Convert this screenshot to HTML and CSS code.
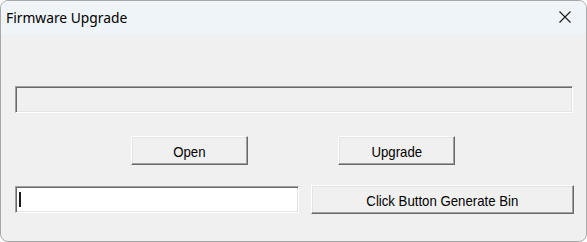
FILE: index.html
```html
<!DOCTYPE html>
<html>
<head>
<meta charset="utf-8">
<link rel="stylesheet" href="styles.css">
</head>
<body>
<div class="window">
  <div class="titlebar">
    <span class="title">Firmware Upgrade</span>
    <svg class="close" width="12" height="12" viewBox="0 0 12 12"><path d="M0.5 0.5 L11.5 11.5 M11.5 0.5 L0.5 11.5" stroke="#1a1a1a" stroke-width="1.1" fill="none"/></svg>
  </div>
  <div class="client">
    <div class="progress"></div>
    <div class="row-buttons">
      <div class="btn btn-open"><span class="label">Open</span></div>
      <div class="btn btn-upgrade"><span class="label">Upgrade</span></div>
    </div>
    <div class="row-bottom">
      <div class="input"><span class="caret"></span></div>
      <div class="btn btn-gen"><span class="label">Click Button Generate Bin</span></div>
    </div>
  </div>
</div>
</body>
</html>
```
FILE: styles.css
```css
html, body {
  margin: 0;
  padding: 0;
  background: #ffffff;
}
.window {
  width: 587px;
  height: 242px;
  box-sizing: border-box;
  border: 1px solid #a8a8a8;
  border-radius: 8px;
  overflow: hidden;
  background: #f0f0f0;
  display: flex;
  flex-direction: column;
}
.titlebar {
  height: 33px;
  background: #eff4f9;
  display: flex;
  align-items: center;
  justify-content: space-between;
  padding: 0 15px 0 5px;
  flex: none;
}
.title {
  font-family: "Noto Sans", "Open Sans", sans-serif;
  font-size: 13.8px;
  color: #000;
  padding-bottom: 1px;
}
.close {
  display: block;
  margin-bottom: 1px;
}
.client {
  flex: 1;
  padding: 52px 0 0 14px;
  font-family: "Liberation Sans", Arial, sans-serif;
  font-size: 15px;
  color: #000;
}
.progress {
  width: 558px;
  height: 27px;
  box-sizing: border-box;
  border: 1px solid;
  border-color: #a0a0a0 #ffffff #ffffff #a0a0a0;
  box-shadow: inset 1px 1px #696969, inset -1px -1px #e3e3e3;
}
.row-buttons {
  display: flex;
  margin-top: 23px;
  padding-left: 116px;
  gap: 90px;
}
.btn {
  height: 29px;
  box-sizing: border-box;
  border: 1px solid;
  border-color: #ffffff #696969 #696969 #ffffff;
  box-shadow: inset -1px -1px #a0a0a0, inset 1px 1px #e3e3e3;
  background: #f0f0f0;
  display: flex;
  align-items: center;
  justify-content: center;
  padding-top: 1px;
}
.label {
  display: inline-block;
  transform: scaleX(0.88);
  white-space: nowrap;
}
.btn-open, .btn-upgrade {
  width: 117px;
}
.row-bottom {
  display: flex;
  align-items: center;
  margin-top: 20px;
  gap: 12px;
}
.input {
  width: 284px;
  height: 27px;
  box-sizing: border-box;
  border: 1px solid;
  border-color: #a0a0a0 #ffffff #ffffff #a0a0a0;
  box-shadow: inset 1px 1px #696969, inset -1px -1px #e3e3e3;
  background: #ffffff;
  display: flex;
  align-items: center;
  padding-left: 3px;
}
.caret {
  display: block;
  width: 2px;
  height: 15px;
  background: #1a1a1a;
}
.btn-gen {
  width: 263px;
}
```
